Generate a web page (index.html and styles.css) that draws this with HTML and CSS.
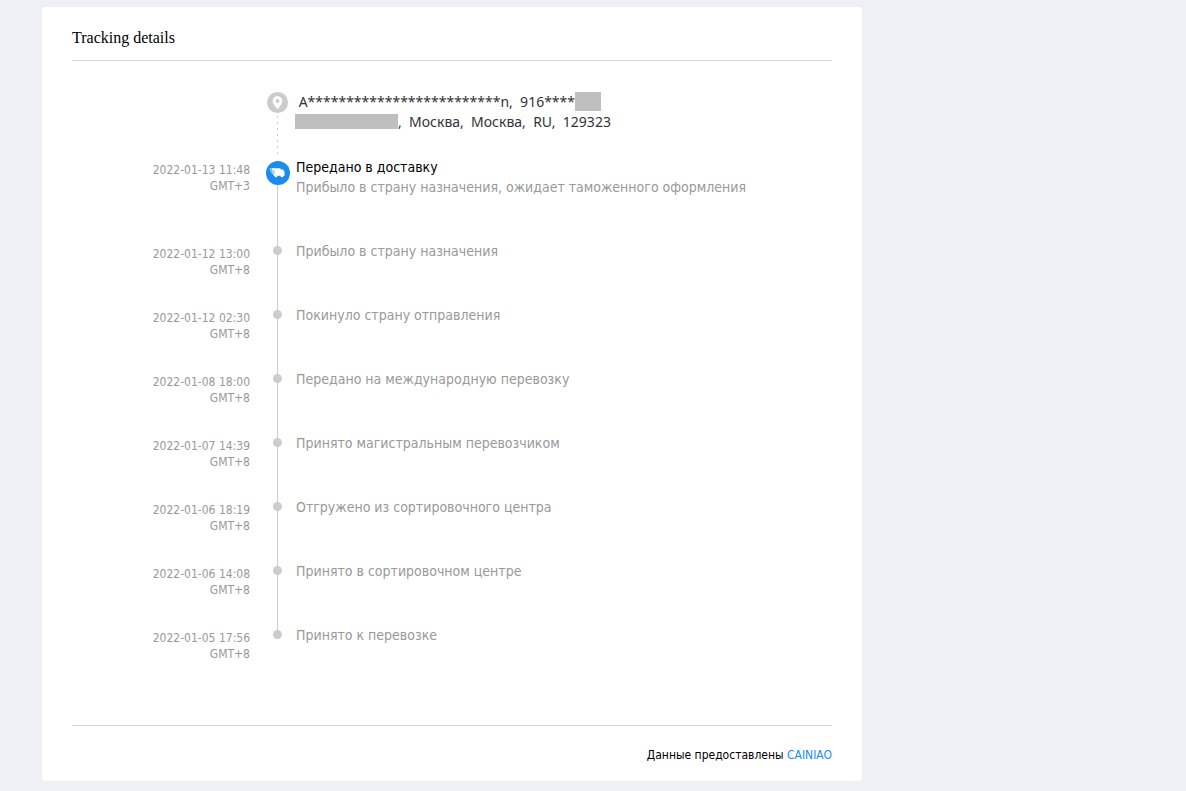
FILE: index.html
```html
<!DOCTYPE html>
<html lang="ru">
<head>
    <meta charset="UTF-8">
    <title>Tracking details</title>
    <link rel="stylesheet" href="styles.css">
</head>
<body>
<div class="card">
    <h2 class="card-title">Tracking details</h2>
    <ul class="timeline">
        <li class="row row-address">
            <div class="date"></div>
            <div class="marker">
                <svg class="pin" width="21" height="21" viewBox="0 0 21 21">
                    <circle cx="10.5" cy="10.5" r="10.5" fill="#ccc"/>
                    <path fill="#fff" fill-rule="evenodd" d="M10.5 4.2a4.8 4.8 0 0 0-4.8 4.8c0 2.8 2.4 5 4.8 8.2 2.4-3.2 4.8-5.4 4.8-8.2a4.8 4.8 0 0 0-4.8-4.8zm0 2.9a1.9 1.9 0 1 1 0 3.8 1.9 1.9 0 0 1 0-3.8z"/>
                </svg>
            </div>
            <div class="info address">&nbsp;A*************************n,&nbsp; 916****<span class="hidden-phone"></span><br><span class="hidden-street"></span>,&nbsp; Москва,&nbsp; Москва,&nbsp; RU,&nbsp; 129323</div>
        </li>
        <li class="row">
            <div class="date">2022-01-13 11:48<br>GMT+3</div>
            <div class="marker marker-current">
                <svg width="25" height="24" viewBox="0 0 25 24">
                    <circle cx="13" cy="12" r="12" fill="#1a8cf0"/>
                    <path fill="#fff" d="M8.2 7.2h6.8q.6 0 .6.6v.7h2q.6 0 .9.4l1.1 2.1v3.2q0 .6-.6.6h-.5a1.5 1.5 0 0 1-3 0h-3a1.5 1.5 0 0 1-3 0h-.3q-.6 0-.7-.6l-.4-1.6h1.9v-1h-2.2l-.3-1.2h2v-1h-2.3l-.3-1.6q0-.6.3-.6z"/>
                    <path fill="none" stroke="#fff" stroke-width=".9" d="M4.5 8h4M5 10.1h4M6.5 12.2h3"/>
                </svg>
            </div>
            <div class="info"><strong class="status">Передано в доставку</strong>Прибыло в страну назначения, ожидает таможенного оформления</div>
        </li>
        <li class="row">
            <div class="date">2022-01-12 13:00<br>GMT+8</div>
            <div class="marker"><span class="dot"></span></div>
            <div class="info">Прибыло в страну назначения</div>
        </li>
        <li class="row">
            <div class="date">2022-01-12 02:30<br>GMT+8</div>
            <div class="marker"><span class="dot"></span></div>
            <div class="info">Покинуло страну отправления</div>
        </li>
        <li class="row">
            <div class="date">2022-01-08 18:00<br>GMT+8</div>
            <div class="marker"><span class="dot"></span></div>
            <div class="info">Передано на международную перевозку</div>
        </li>
        <li class="row">
            <div class="date">2022-01-07 14:39<br>GMT+8</div>
            <div class="marker"><span class="dot"></span></div>
            <div class="info">Принято магистральным перевозчиком</div>
        </li>
        <li class="row">
            <div class="date">2022-01-06 18:19<br>GMT+8</div>
            <div class="marker"><span class="dot"></span></div>
            <div class="info">Отгружено из сортировочного центра</div>
        </li>
        <li class="row">
            <div class="date">2022-01-06 14:08<br>GMT+8</div>
            <div class="marker"><span class="dot"></span></div>
            <div class="info">Принято в сортировочном центре</div>
        </li>
        <li class="row">
            <div class="date">2022-01-05 17:56<br>GMT+8</div>
            <div class="marker"><span class="dot"></span></div>
            <div class="info">Принято к перевозке</div>
        </li>
    </ul>
    <div class="card-footer">Данные предоставлены <a href="#">CAINIAO</a></div>
</div>
</body>
</html>
```

FILE: styles.css
```css
*{margin: 0; padding: 0; box-sizing: border-box;}
body{
    padding: 7px 42px 10px;
    background: #eff0f5;
    font-family: Tahoma, "DejaVu Sans Condensed", "Noto Sans", sans-serif;
    font-size: 14px;
    line-height: 20px;
}
.card{
    max-width: 820px;
    padding: 0 30px;
    background: #fff;
    border-radius: 4px;
}
.card-title{
    padding: 21px 0 12px;
    border-bottom: 1px solid #d6d6d6;
    font: 16px/20px "Liberation Serif", "Times New Roman", serif;
    color: #000;
}
.timeline{
    padding: 31px 0 36px;
    list-style: none;
}
.row{
    display: grid;
    grid-template-columns: 193px 25px 1fr;
}
.date{
    padding: 5px 15px 0 0;
    font-size: 12px;
    line-height: 16px;
    text-align: right;
    color: #999;
}
.marker{
    display: flex;
    flex-direction: column;
    align-items: center;
    background: linear-gradient(#ccc, #ccc) center top / 1px 100% no-repeat;
}
.row:last-child .marker{background-size: 1px 10px;}
.row-address .marker{
    background-image: repeating-linear-gradient(#ccc 0, #ccc 2px, transparent 2px, transparent 6px);
}
.marker-current{
    padding-top: 4px;
    background-position: center bottom;
    background-size: 1px 70px;
}
.dot{
    width: 9px;
    height: 9px;
    margin-top: 5px;
    border-radius: 50%;
    background: #ccc;
}
.info{
    padding: 0 0 44px 6px;
    color: #999;
}
.address{
    padding: 0 0 25px 5px;
    font-family: "Noto Sans", sans-serif;
    color: #333;
}
.status{
    display: block;
    font-weight: normal;
    color: #000;
}
.hidden-phone, .hidden-street{
    display: inline-block;
    vertical-align: top;
    background: #bfbfbf;
}
.hidden-phone{width: 26px; height: 19px;}
.hidden-street{width: 103px; height: 15px; margin-top: 2px;}
.card-footer{
    padding: 21px 0 18px;
    border-top: 1px solid #d6d6d6;
    font-size: 12px;
    line-height: 16px;
    text-align: right;
    color: #000;
}
.card-footer a{
    color: #1a8cf0;
    text-decoration: none;
}
```
